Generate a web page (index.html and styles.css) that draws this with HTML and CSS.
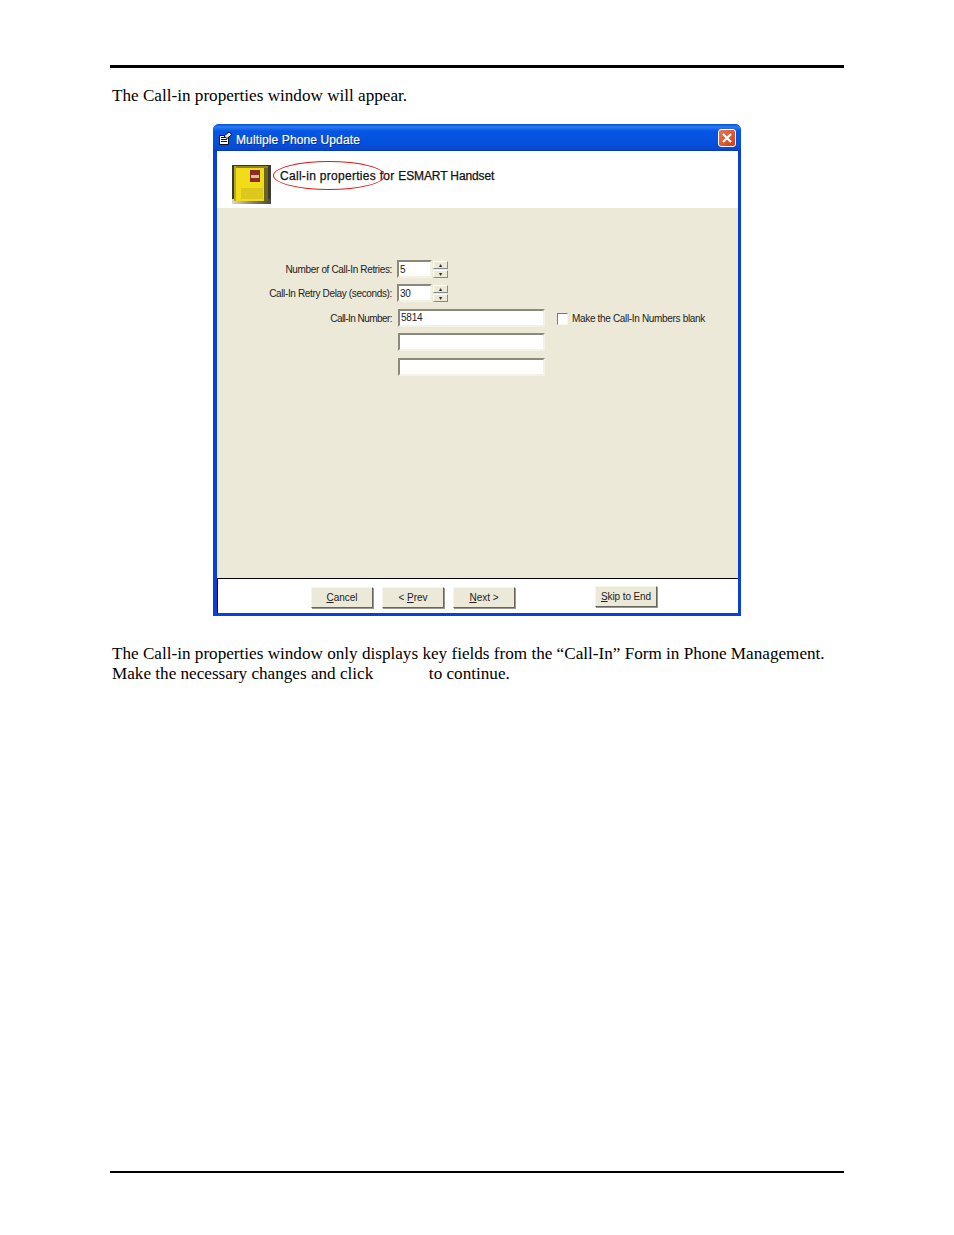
FILE: index.html
```html
<!DOCTYPE html>
<html lang="en">
<head>
<meta charset="utf-8">
<title>Call-in properties</title>
<link rel="stylesheet" href="styles.css">
</head>
<body>
<div class="page">
  <hr class="rule rule-top">
  <p class="intro">The Call-in properties window will appear.</p>
  <div class="window">
    <div class="titlebar">
      <svg class="app-icon" width="15" height="15" viewBox="0 0 15 15"><path d="M1.5 4.5h9v9h-9z" fill="#fff" stroke="#111"/><path d="M3 6.5h6M3 8.5h6M3 10.5h6" stroke="#111"/><path d="M6 5l5-4 3 2.5-5 4z" fill="#e8e8e0" stroke="#111"/></svg>
      <span class="title">Multiple Phone Update</span>
      <span class="close"><svg width="12" height="12" viewBox="0 0 12 12"><path d="M2 2l8 8M10 2l-8 8" stroke="#fff" stroke-width="2.2"/></svg></span>
    </div>
    <div class="inner">
      <div class="head">
        <svg class="phone" width="39" height="39" viewBox="0 0 39 39">
          <defs><linearGradient id="floor" x1="0" y1="0" x2="1" y2="0"><stop offset="0" stop-color="#ddd8c8"/><stop offset=".5" stop-color="#8a8676"/><stop offset="1" stop-color="#4a4840"/></linearGradient></defs>
          <rect width="39" height="39" fill="#3c3a30"/>
          <rect y="34" width="39" height="5" fill="url(#floor)"/>
          <rect x="2" y="1" width="34" height="35" fill="#f0dc18"/>
          <rect x="2" y="1" width="34" height="2" fill="#8b8420"/>
          <rect x="2" y="1" width="2" height="35" fill="#b8aa20"/>
          <rect x="32" y="3" width="4" height="33" fill="#6c6418"/>
          <rect x="18" y="5" width="10" height="12" fill="#8a2a2c"/>
          <rect x="19" y="10" width="8" height="3" fill="#d8c090"/>
          <rect x="9" y="23" width="22" height="11" fill="#dcc81c"/>
        </svg>
        <div class="head-text">Call-in properties for <span class="head-model">ESMART Handset</span></div>
        <span class="oval"></span>
      </div>
      <div class="body">
        <div class="form">
          <label class="lbl">Number of Call-In Retries:</label>
          <div class="spin-wrap">
            <span class="field short">5</span>
            <span class="spin"><i>▴</i><i>▾</i></span>
          </div>
          <label class="lbl">Call-In Retry Delay (seconds):</label>
          <div class="spin-wrap">
            <span class="field short">30</span>
            <span class="spin"><i>▴</i><i>▾</i></span>
          </div>
          <label class="lbl lbl-tight">Call-In Number:</label>
          <div class="num-wrap">
            <span class="field long">5814</span>
            <span class="check"></span>
            <span class="check-label">Make the Call-In Numbers blank</span>
          </div>
          <div class="num-wrap col2"><span class="field long"></span></div>
          <div class="num-wrap col2"><span class="field long"></span></div>
        </div>
      </div>
      <div class="foot">
        <button class="btn b-cancel"><u>C</u>ancel</button>
        <button class="btn b-prev">&lt; <u>P</u>rev</button>
        <button class="btn b-next"><u>N</u>ext &gt;</button>
        <button class="btn b-skip"><u>S</u>kip to End</button>
      </div>
    </div>
  </div>
  <p class="desc">The Call-in properties window only displays key fields from the “Call-In” Form in Phone Management.<br>Make the necessary changes and click <span class="gap"></span> to continue.</p>
  <div class="spacer"></div>
  <hr class="rule rule-bottom">
</div>
</body>
</html>
```
FILE: styles.css
```css
html, body { margin: 0; padding: 0; background: #fff; }
.page {
  width: 954px; height: 1235px; box-sizing: border-box;
  padding: 65px 110px 0; display: flex; flex-direction: column;
  font-family: "Liberation Serif", serif; font-size: 17.15px; line-height: 20px; color: #000;
}
.rule { border: 0; margin: 0; background: #000; flex: none; }
.rule-top { height: 3px; }
.rule-bottom { height: 2px; }
.spacer { flex: none; height: 487px; }
.intro { margin: 18px 0 0 2px; }
.desc { margin: 28px 0 0 2px; white-space: nowrap; }
.gap { display: inline-block; width: 47px; }

.window {
  width: 528px; height: 492px; margin: 18px 0 0 103px; flex: none;
  box-sizing: border-box; display: flex; flex-direction: column;
  font-family: "Liberation Sans", sans-serif; background: #0a3fd8;
  border-radius: 6px 6px 0 0; padding: 0 3px 3px 1px;
}
.titlebar {
  height: 27px; flex: none; margin: 0 -3px 0 -1px; padding: 0 5px 0 5px; display: flex; align-items: center;
  border-radius: 6px 6px 0 0;
  background: linear-gradient(#0a4fd0 0, #2a7cf2 3px, #0656e4 7px, #0450dc 20px, #0a48d0 25px, #0638b8 27px);
}
.app-icon { flex: none; margin-top: 2px; }
.title { margin: 5px 0 0 3px; color: #fff; font-size: 12px; letter-spacing: .12px; text-shadow: 1px 1px 0 #0a2a90; flex: 1; -webkit-text-stroke: .2px #fff; }
.close {
  width: 18px; height: 18px; flex: none; box-sizing: border-box; display: flex; align-items: center; justify-content: center;
  border: 1px solid #fff; border-radius: 3px; background: linear-gradient(135deg, #e87a55, #d03c14);
}
.inner { flex: 1; min-height: 0; margin-left: 3px; background: #ece9d8; display: flex; flex-direction: column; }
.head { height: 57px; flex: none; background: #fff; position: relative; display: flex; align-items: flex-start; }
.phone { margin: 14px 0 0 15px; flex: none; }
.head-text { margin: 18px 0 0 9px; font-size: 12px; line-height: 14px; letter-spacing: .3px; color: #111; -webkit-text-stroke: .25px #111; white-space: nowrap; }
.head-model { letter-spacing: -.12px; }
.oval {
  position: absolute; left: 56px; top: 10px; width: 112px; height: 29px;
  border: 1.5px solid #e01818; border-radius: 50%; box-sizing: border-box;
}
.body { flex: 1; min-height: 0; padding: 52px 0 0 0; }
.form { display: grid; grid-template-columns: 175px 1fr; grid-template-rows: 24px 25px 24px 25px 25px; column-gap: 5px; }
.lbl { font-size: 10px; line-height: 20px; letter-spacing: -.35px; text-align: right; color: #222; white-space: nowrap; }
.lbl-tight { letter-spacing: -.55px; }
.col2 { grid-column: 2; }
.spin-wrap, .num-wrap { display: flex; align-items: flex-start; }
.field {
  display: block; box-sizing: border-box; background: #fff; font-size: 10px; line-height: 13px; letter-spacing: -.2px; color: #222;
  border: 2px solid; border-color: #8a8a7c #f4f2e6 #f4f2e6 #8a8a7c; padding: 0 0 0 1px; flex: none;
}
.short { width: 35px; height: 18px; padding-top: 1px; }
.long { width: 147px; height: 18px; margin-left: 1px; padding-left: 1px; }
.spin { display: flex; flex-direction: column; width: 15px; margin: 1px 0 0 1px; }
.spin i {
  display: block; height: 8px; background: #ece9d8; font-style: normal; font-size: 6px; line-height: 7px; text-align: center;
  box-sizing: border-box; border: 1px solid; border-color: #fff #888 #888 #fff; color: #222;
}
.spin i + i { margin-top: 1px; }
.check { width: 11px; height: 12px; box-sizing: border-box; flex: none; margin: 4px 0 0 12px; background: #fff; border: 1px solid; border-color: #777 #f8f6ea #f8f6ea #777; }
.check-label { font-size: 10px; line-height: 14px; letter-spacing: -.33px; margin: 3px 0 0 4px; color: #222; white-space: nowrap; }
.foot { height: 34px; flex: none; background: #fff; border-top: 1px solid #000; border-left: 1px solid #000; display: flex; align-items: flex-start; }
.btn {
  height: 21px; width: 62px; padding: 0; font-family: "Liberation Sans", sans-serif; font-size: 10px; color: #222;
  background: #ece9d8; border: 1px solid; border-color: #f8f6ea #66665c #66665c #f8f6ea; box-shadow: 1px 1px 0 #9a9a8c;
  flex: none; margin-top: 8px;
}
.b-cancel { margin-left: 93px; }
.b-prev { margin-left: 9px; }
.b-next { margin-left: 9px; }
.b-skip { margin-left: 80px; margin-top: 7px; letter-spacing: -.1px; }
```
